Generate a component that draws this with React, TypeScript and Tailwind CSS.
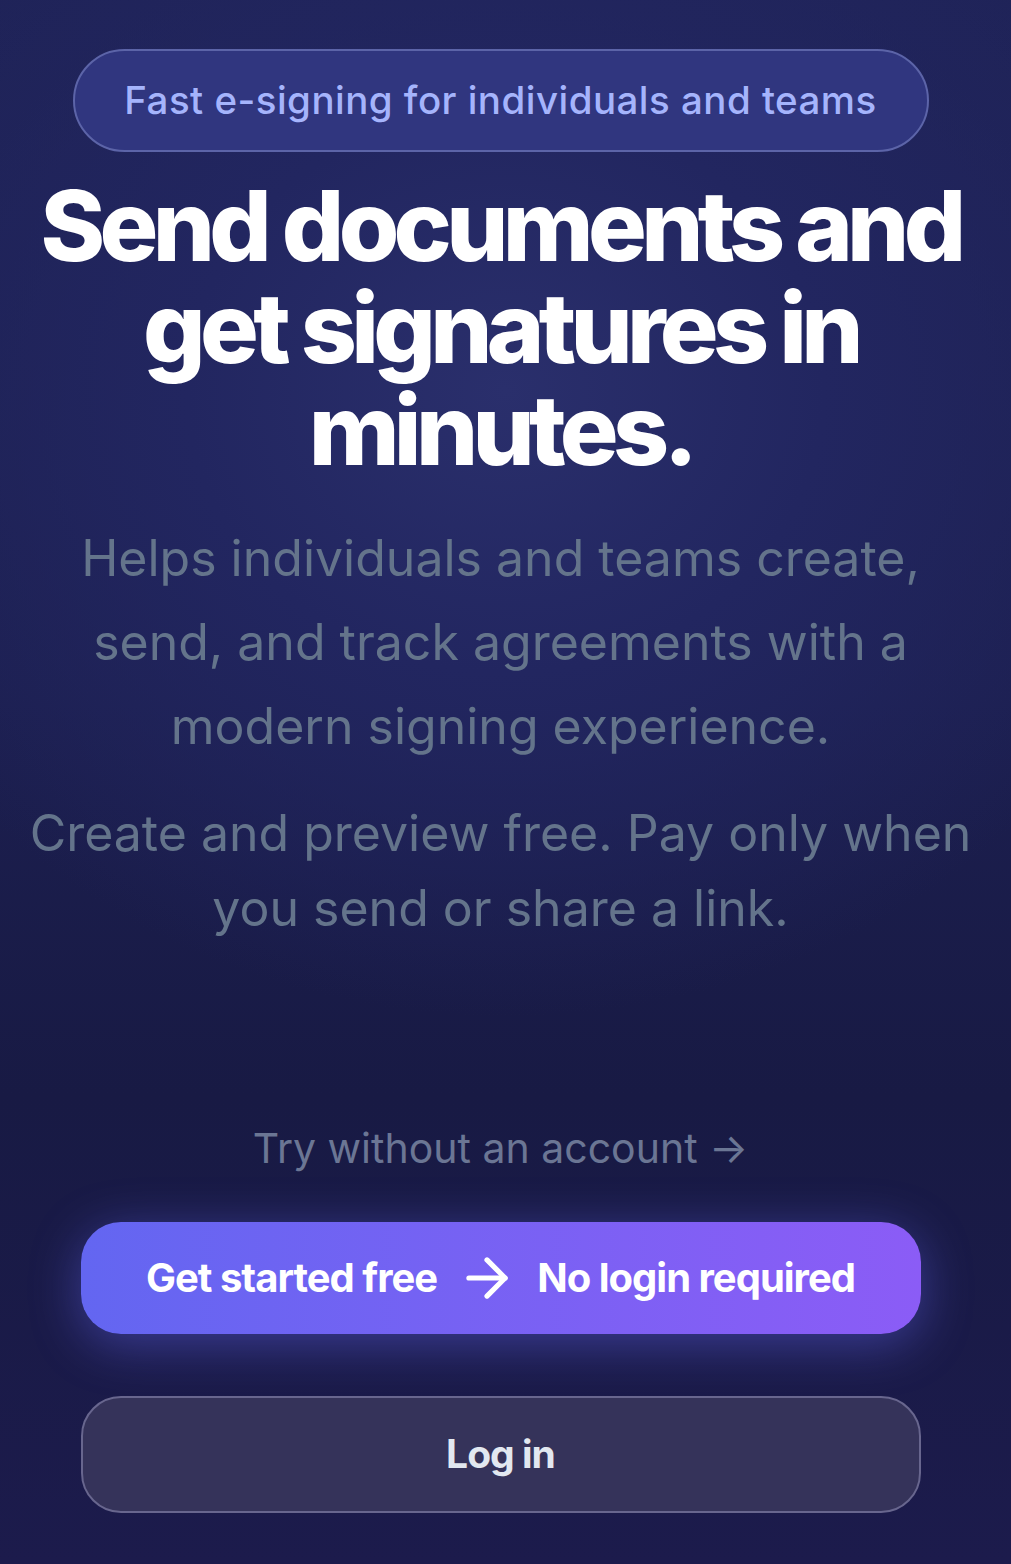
import { ArrowRight } from "lucide-react";

const sans = "font-['Inter','Noto_Sans',sans-serif]";

export default function App() {
  return (
    <main
      className={`${sans} min-h-[1564px] w-full overflow-hidden bg-[#1a1b47] bg-[radial-gradient(ellipse_70%_40%_at_50%_25%,#2a2f6c_0%,#222660_45%,transparent_100%),linear-gradient(180deg,#1f2358_0%,#1c1f50_45%,#181a44_70%,#1c1b4c_100%)]`}
    >
      <div className="flex flex-col items-center pr-[10px] pt-[49px] text-center">
        <div className="flex h-[103px] w-[856px] items-center justify-center rounded-full border-2 border-[#5c64a8] bg-[#30367f]">
          <span className="text-[38.5px] font-medium tracking-[0.012em] text-[#a5b4fc]">
            Fast e-signing for individuals and teams
          </span>
        </div>

        <h1 className="mt-[23px] text-[98px] font-extrabold leading-[102px] tracking-[-0.058em] text-white">
          Send documents and
          <br />
          get signatures in
          <br />
          minutes.
        </h1>

        <p className="mt-[35px] text-[50px] leading-[84px] text-[#64748b]">
          Helps individuals and teams create,
          <br />
          send, and track agreements with a
          <br />
          modern signing experience.
        </p>

        <p className="mt-[28px] text-[50px] leading-[75px] text-[#64748b]">
          Create and preview free. Pay only when
          <br />
          you send or share a link.
        </p>

        <a className="mt-[178px] text-[41px] leading-[48px] text-[#6b7694]">
          Try without an account →
        </a>

        <div className="mt-[50px] flex w-[840px] flex-col gap-[62px]">
          <button className="flex h-[112px] items-center justify-center gap-[32px] rounded-[40px] bg-gradient-to-r from-[#6366f1] to-[#8b5cf6] text-[40px] font-bold tracking-[-0.025em] text-white shadow-[0_10px_50px_rgba(99,102,241,0.45)]">
            <span>Get started free</span>
            <ArrowRight className="-mx-[13px] h-[62px] w-[62px]" strokeWidth={2} />
            <span>No login required</span>
          </button>

          <button className="flex h-[117px] items-center justify-center rounded-[40px] border-2 border-[#68668e] bg-[#35335a] text-[39px] font-bold tracking-[-0.025em] text-[#e2e8f0]">
            Log in
          </button>
        </div>
      </div>
    </main>
  );
}
